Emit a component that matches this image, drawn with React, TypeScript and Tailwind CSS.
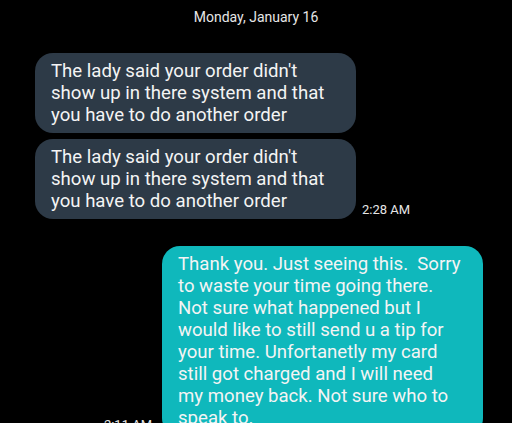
const received = [
  ["The lady said your order didn't", "show up in there system and that", "you have to do another order"],
  ["The lady said your order didn't", "show up in there system and that", "you have to do another order"],
]

const sent = [
  "Thank you. Just seeing this.\u00a0 Sorry",
  "to waste your time going there.",
  "Not sure what happened but I",
  "would like to still send u a tip for",
  "your time. Unfortanetly my card",
  "still got charged and I will need",
  "my money back. Not sure who to",
  "speak to.",
]

function Bubble({lines, color}: {lines: string[], color: string}) {
  return (
    <div className={`w-[321px] shrink-0 rounded-[18px] px-[16px] py-[7px] text-[18.6px] leading-[22px] whitespace-nowrap text-[#f4f4f4] ${color}`}>
      {lines.map((l, i) => <div key={i}>{l}</div>)}
    </div>
  )
}

export default function App() {
  return (
    <div className="w-[512px] h-[423px] overflow-hidden bg-black font-['Roboto',sans-serif]">
      <div className="pt-[7px] text-center text-[14px] leading-[20px] text-[#e6e6e6]">Monday, January 16</div>

      <div className="mt-[26px] flex flex-col gap-[6px] pl-[35px]">
        {received.map((t, i) => (
          <div key={i} className="flex items-end">
            <Bubble lines={t} color="bg-[#2d3a47]"/>
            {i === received.length - 1 && (
              <div className="ml-[6px] mb-[1px] text-[13px] leading-[16px] text-[#e6e6e6]">2:28 AM</div>
            )}
          </div>
        ))}
      </div>

      <div className="mt-[27px] flex items-end justify-end pr-[29px]">
        <div className="mr-[10px] mb-[3px] text-[13px] leading-[16px] text-[#e6e6e6]">2:11 AM</div>
        <Bubble lines={sent} color="bg-[#0fb8bc]"/>
      </div>
    </div>
  )
}
